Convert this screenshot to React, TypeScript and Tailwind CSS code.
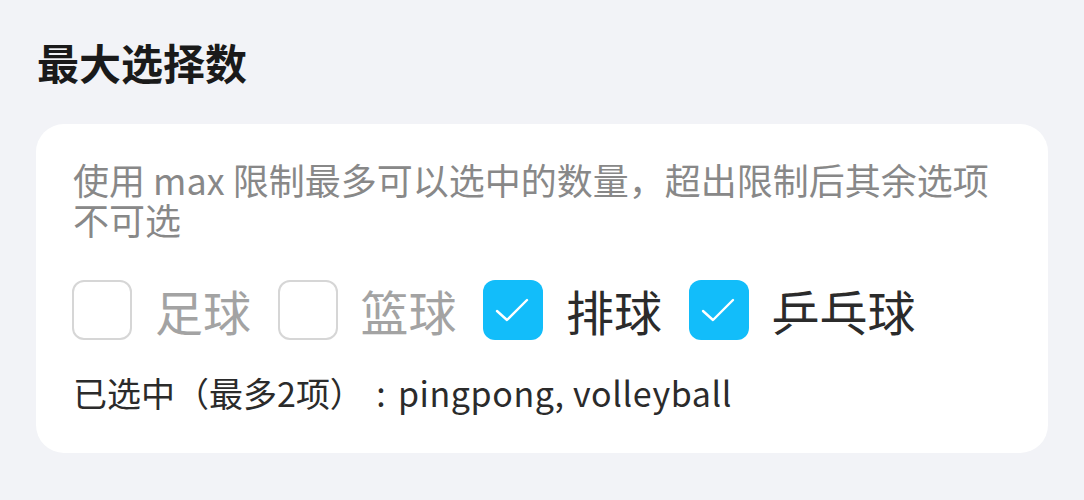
import React, { useState } from "react";

interface Option {
  label: string;
  value: string;
}

const options: Option[] = [
  { label: "足球", value: "football" },
  { label: "篮球", value: "basketball" },
  { label: "排球", value: "volleyball" },
  { label: "乒乓球", value: "pingpong" },
];

const MAX = 2;

const CheckBox = ({ checked }: { checked: boolean }) => {
  if (checked) {
    return (
      <div className="w-[60px] h-[60px] rounded-[12px] bg-[#12bdfa] shrink-0">
        <svg width="60" height="60" viewBox="0 0 60 60" fill="none">
          <path
            d="M14 31 L24 40 L44 20"
            stroke="#ffffff"
            strokeWidth="2.4"
            strokeLinecap="round"
            strokeLinejoin="round"
          />
        </svg>
      </div>
    );
  }
  return (
    <div className="w-[60px] h-[60px] rounded-[12px] border-2 border-[#d6d6d6] bg-white shrink-0" />
  );
};

export default function App() {
  const [selected, setSelected] = useState<string[]>(["pingpong", "volleyball"]);

  const toggle = (value: string) => {
    if (selected.includes(value)) {
      setSelected(selected.filter((v) => v !== value));
    } else if (selected.length < MAX) {
      setSelected([...selected, value]);
    }
  };

  return (
    <div
      className="w-[1084px] h-[500px] bg-[#f2f3f7] px-[36px] pt-[37px]"
      style={{ fontFamily: '"Noto Sans CJK SC", "Noto Sans", sans-serif' }}
    >
      <h2 className="text-[42px] leading-[50px] font-bold text-[#1a1a1a] pl-[1px]">
        最大选择数
      </h2>
      <div className="mt-[37px] bg-white rounded-[28px] px-[36px] pt-[35px] pb-[40px]">
        <p className="pl-[1px] text-[36px] leading-[40px] text-[#888888]">
          使用 max 限制最多可以选中的数量，超出限制后其余选项不可选
        </p>
        <div className="mt-[41px] flex items-center h-[60px]">
          {options.map((opt) => {
            const checked = selected.includes(opt.value);
            const disabled = !checked && selected.length >= MAX;
            return (
              <div
                key={opt.value}
                className="flex items-center mr-[26.5px] cursor-pointer"
                onClick={() => toggle(opt.value)}
              >
                <CheckBox checked={checked} />
                <span
                  className={
                    "ml-[23px] text-[48px] leading-[60px] " +
                    (disabled ? "text-[#a3a3a3]" : "text-[#2b2b2b]")
                  }
                >
                  {opt.label}
                </span>
              </div>
            );
          })}
        </div>
        <p className="mt-[33px] pl-[1px] text-[34px] leading-[40px] text-[#2b2b2b]">
          已选中（最多{MAX}项）
          <span className="inline-block w-[34px] text-center">:</span>
          <span className="tracking-[0.6px]">{selected.join(", ")}</span>
        </p>
      </div>
    </div>
  );
}
